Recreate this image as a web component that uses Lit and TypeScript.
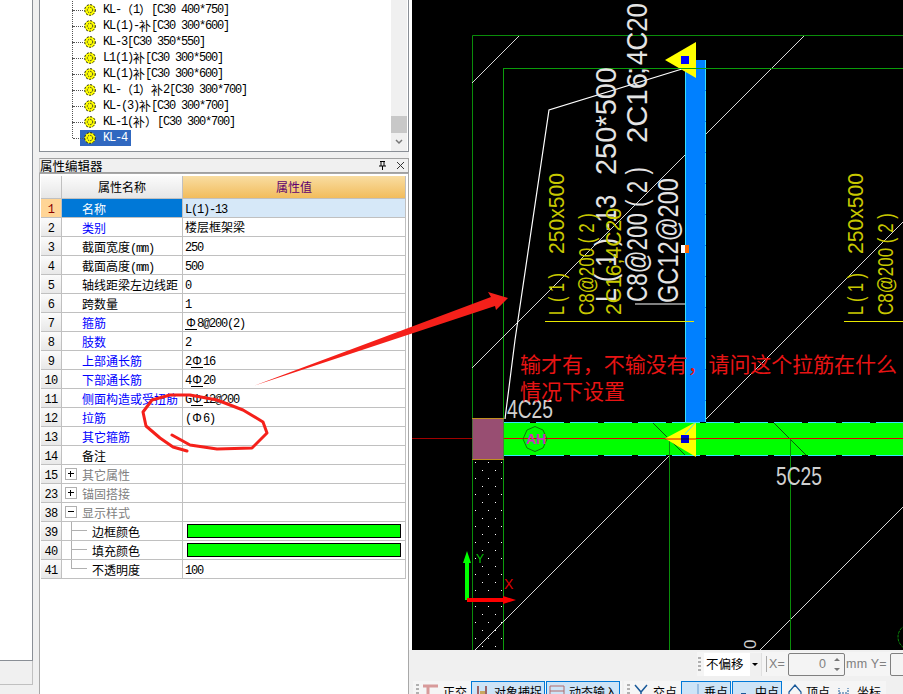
import { LitElement, css, html, svg } from "lit";
import { customElement } from "lit/decorators.js";

// latin glyphs run at 6px advance, CJK at 12px, like the bitmap font of the app
function runs(text: string) {
  const parts = text.match(/[\u2e80-\u9fff\uff00-\uffef]+|[^\u2e80-\u9fff\uff00-\uffef]+/g) || [];
  return parts.map((p) =>
    /[\u2e80-\u9fff\uff00-\uffef]/.test(p)
      ? html`<span class="cjk">${p}</span>`
      : html`<span class="lat">${p}</span>`
  );
}

// # = grade III rebar symbol, $ = plain round bar
function rebar(text: string) {
  const parts = text.split(/([#$])/);
  return parts.map((p) => {
    if (p === "#") return html`<span class="bar three">Φ</span>`;
    if (p === "$") return html`<span class="bar">Φ</span>`;
    return runs(p);
  });
}

const TREE = [
  "KL-（1）[C30 400*750]",
  "KL(1)-补[C30 300*600]",
  "KL-3[C30 350*550]",
  "L1(1)补[C30 300*500]",
  "KL(1)补[C30 300*600]",
  "KL-（1）补2[C30 300*700]",
  "KL-(3)补[C30 300*700]",
  "KL-1(补）[C30 300*700]",
  "KL-4",
];

type Row = {
  n: string;
  name: string;
  value?: string;
  kind?: "link" | "grp" | "sub";
  open?: boolean;
  swatch?: boolean;
  last?: boolean;
};

const ROWS: Row[] = [
  { n: "1", name: "名称", value: "L(1)-13", kind: "link" },
  { n: "2", name: "类别", value: "楼层框架梁", kind: "link" },
  { n: "3", name: "截面宽度(mm)", value: "250" },
  { n: "4", name: "截面高度(mm)", value: "500" },
  { n: "5", name: "轴线距梁左边线距", value: "0" },
  { n: "6", name: "跨数量", value: "1" },
  { n: "7", name: "箍筋", value: "#8@200(2)", kind: "link" },
  { n: "8", name: "肢数", value: "2", kind: "link" },
  { n: "9", name: "上部通长筋", value: "2#16", kind: "link" },
  { n: "10", name: "下部通长筋", value: "4#20", kind: "link" },
  { n: "11", name: "侧面构造或受扭筋", value: "G#12@200", kind: "link" },
  { n: "12", name: "拉筋", value: "($6)", kind: "link" },
  { n: "13", name: "其它箍筋", kind: "link" },
  { n: "14", name: "备注" },
  { n: "15", name: "其它属性", kind: "grp" },
  { n: "23", name: "锚固搭接", kind: "grp" },
  { n: "38", name: "显示样式", kind: "grp", open: true },
  { n: "39", name: "边框颜色", kind: "sub", swatch: true },
  { n: "40", name: "填充颜色", kind: "sub", swatch: true },
  { n: "41", name: "不透明度", kind: "sub", value: "100", last: true },
];

const gear = html`<svg class="gear" width="12" height="12" viewBox="0 0 12 12">
  <circle cx="6" cy="6" r="5.500" fill="#ffff00" />
  <circle cx="6" cy="6" r="5.300" fill="none" stroke="#111" stroke-dasharray="2 1.500" />
  <circle cx="6" cy="6" r="2.700" fill="none" stroke="#333" stroke-dasharray="1.500 1" />
</svg>`;

@customElement("cad-canvas")
export class CadCanvas extends LitElement {
  static styles = css`
    :host {
      display: block;
      width: 491px;
      height: 650px;
      background: #000;
    }
    svg {
      display: block;
    }
    .w {
      font-family: "Liberation Sans", sans-serif;
      fill: #e4e4e4;
      font-size: 30px;
    }
    .y {
      font-family: "Liberation Sans", sans-serif;
      fill: #c8c800;
      font-size: 22px;
    }
    .num {
      font-family: "Liberation Sans", sans-serif;
      fill: #d0d0d0;
      font-size: 25px;
    }
    .zero {
      font-family: "Liberation Sans", sans-serif;
      fill: #d0d0d0;
      font-size: 17px;
    }
    .note {
      font-family: "Noto Sans CJK SC", sans-serif;
      fill: #e81414;
      font-size: 21px;
    }
    .ah {
      font-family: "Liberation Sans", sans-serif;
      fill: #d030c0;
      font-size: 14px;
      font-weight: bold;
    }
    .ax {
      font-family: "Liberation Sans", sans-serif;
    }
  `;

  private _up(x: number, y: number, len: number, text: string, cls: string) {
    return svg`<text class=${cls} transform="translate(${x} ${y}) rotate(-90)" textLength=${len} lengthAdjust="spacingAndGlyphs">${text}</text>`;
  }

  render() {
    return html`<svg width="491" height="650" viewBox="412 0 491 650">
      <defs>
        <pattern id="dots" x="474" y="461" width="13" height="16" patternUnits="userSpaceOnUse">
          <rect x="1" y="1" width="1" height="1" fill="#fff" />
          <rect x="8" y="9" width="1" height="1" fill="#fff" />
        </pattern>
      </defs>

      <rect x="473" y="460" width="30" height="190" fill="url(#dots)" />

      <!-- grid frames -->
      <g fill="none" stroke="#0a8c0a" stroke-width="1">
        <path d="M472.500 650V35.500H903" />
        <path d="M503.500 650V68.500H903" stroke="#0c9c0c" />
      </g>

      <!-- hatch diagonals -->
      <g stroke="#eee" stroke-width="0.900" fill="none">
        <path d="M472 83L519 36" />
        <path d="M804 36L472 368" />
        <path d="M475 650L903 222" />
        <path d="M760 650L903 507" />
      </g>

      <!-- vertical beam -->
      <rect x="685" y="60" width="21" height="378" fill="#0080ff" />
      <path d="M685.500 69V422" stroke="#33e0ff" />
      <path d="M705.500 60V422" stroke="#33e0ff" stroke-dasharray="30 1" />

      <!-- horizontal beam -->
      <rect x="504" y="422" width="399" height="34" fill="#00ff00" />
      <path d="M504 422.500H903M504 455.500H903" stroke="#33e8ff" />
      <path d="M504 422.500H903M504 455.500H903" stroke="#000" stroke-dasharray="6 28" stroke-dashoffset="-60" />
      <path d="M653 423L685 455M774 423L806 455" stroke="#0a5a0a" />

      <!-- column -->
      <rect x="472.500" y="418.500" width="31" height="41" fill="#984e72" />
      <path d="M472 418.500H504M472 459.500H504" stroke="#c09020" />

      <!-- axis line and leaders -->
      <path d="M412 438.500H472" stroke="#a00000" />
      <path d="M504 438.500H903" stroke="#e00000" />
      <path d="M669.500 439V650M790.500 439V650" stroke="#0a8c0a" />
      <path d="M682 69L549 110L515 340L505 419" fill="none" stroke="#fff" stroke-width="1.200" />

      <polygon points="665,438.500 696,422 696,457" fill="#ffff00" />
      <path d="M696 422L685 434" stroke="#33e0ff" />
      <path d="M665 439H696" stroke="#e00000" />
      <rect x="681" y="435" width="8" height="8" fill="#0000e0" />
      <path d="M681 439H689" stroke="#111" />

      <polygon points="665,60 696,42 696,78" fill="#ffff00" />
      <rect x="681" y="56" width="8" height="8" fill="#0000ff" />
      <path d="M503 68.500H903" stroke="#0a9c0a" />

      <rect x="681" y="245" width="4" height="8" fill="#fff" />
      <rect x="685" y="245" width="4" height="8" fill="#ff6a00" />

      <!-- rotated labels -->
      ${this._up(616, 302, 107, "L ( 1 ) -13", "w")}
      ${this._up(616, 175, 108, "250*500", "w")}
      ${this._up(647, 302, 135, "C8@200 ( 2 )", "w")}
      ${this._up(647, 143, 70, "2C16", "w")}
      ${this._up(645, 75, 8, ";", "w")}
      ${this._up(647, 65, 62, "4C20", "w")}
      ${this._up(678, 303, 125, "GC12@200", "w")}
      <path d="M635 304H685" stroke="#fff" stroke-width="1.200" />

      ${this._up(564, 315, 42, "L ( 1 )", "y")}
      ${this._up(564, 254, 81, "250x500", "y")}
      ${this._up(594, 315, 102, "C8@200 ( 2 )", "y")}
      ${this._up(621, 315, 107, "2C16;4C20", "y")}
      <path d="M545 321.500H694" stroke="#e8e800" />

      ${this._up(863, 315, 42, "L ( 1 )", "y")}
      ${this._up(863, 254, 81, "250x500", "y")}
      ${this._up(893, 315, 102, "C8@200 ( 2 )", "y")}
      <path d="M844 321.500H903" stroke="#e8e800" />

      <text class="num" x="507" y="418" textLength="46" lengthAdjust="spacingAndGlyphs">4C25</text>
      <text class="num" x="776" y="485" textLength="46" lengthAdjust="spacingAndGlyphs">5C25</text>
      <text class="zero" transform="translate(756 649) rotate(-90)">0</text>

      <polygon points="523,439 527,430 535,426.500 543,430 547,439 543,448 535,451.500 527,448" fill="none" stroke="#0a7a0a" />
      <text class="ah" x="526" y="444">AH</text>
      <circle cx="911" cy="637" r="13" fill="none" stroke="#0a8c0a" stroke-dasharray="3 1" />

      <!-- UCS arrows -->
      <polygon points="465,600 465,563 463,563 467,551 471,563 469,563 469,600" fill="#00ff00" />
      <polygon points="467,598 503,598 503,596 516,600 503,604 503,602 467,602" fill="#ff0000" />
      <text class="ax" x="476" y="563" fill="#00c000" font-size="12">Y</text>
      <text class="ax" x="504" y="589" fill="#e00000" font-size="14">X</text>

      <text class="note" x="520" y="372" textLength="377">输才有，不输没有，请问这个拉筋在什么</text>
      <text class="note" x="520" y="399" textLength="105">情况下设置</text>
    </svg>`;
  }
}

@customElement("app-root")
export class AppRoot extends LitElement {
  static styles = css`
    :host {
      display: block;
      width: 903px;
      height: 694px;
    }
    .root {
      position: relative;
      display: flex;
      width: 903px;
      height: 694px;
      overflow: hidden;
      background: #f0f0f0;
      font-size: 12px;
      color: #000;
      font-family: "Noto Sans CJK SC", sans-serif;
    }
    .cjk {
      font-family: "Noto Sans CJK SC", sans-serif;
      font-size: 12px;
    }
    .lat {
      font-family: "Liberation Mono", monospace;
      font-size: 12px;
      letter-spacing: -1.2px;
      white-space: pre;
    }
    .bar {
      display: inline-block;
      width: 12px;
      height: 12px;
      line-height: 11px;
      text-align: center;
      font-family: "Liberation Sans", sans-serif;
      font-size: 12px;
      box-sizing: border-box;
    }
    .bar.three {
      border-bottom: 1px solid #000;
    }

    /* far left stub */
    .stub {
      width: 33px;
      flex: none;
      display: flex;
      flex-direction: column;
    }
    .stub-top {
      height: 661px;
      flex: none;
      box-sizing: border-box;
      background: #fff;
      border-right: 1px solid #8a8f96;
      border-bottom: 1px solid #8a8f96;
    }
    .stub-mid {
      height: 23px;
      flex: none;
      border-right: 1px solid #c0c0c0;
      border-bottom: 1px solid #c0c0c0;
    }

    /* tree and properties */
    .panels {
      width: 376px;
      flex: none;
      box-sizing: border-box;
      padding-left: 6px;
      display: flex;
      flex-direction: column;
    }
    .tree {
      height: 152px;
      flex: none;
      box-sizing: border-box;
      background: #fff;
      border: 1px solid #8a8f96;
      border-top: none;
      position: relative;
      padding-top: 2px;
    }
    .node {
      height: 16px;
      display: flex;
      align-items: center;
      padding-left: 32px;
      position: relative;
    }
    .node::before {
      content: "";
      position: absolute;
      left: 32px;
      top: -8px;
      height: 16px;
      border-left: 1px dotted #555;
    }
    .node::after {
      content: "";
      position: absolute;
      left: 33px;
      top: 8px;
      width: 10px;
      border-top: 1px dotted #555;
    }
    .label {
      display: flex;
      align-items: center;
      height: 16px;
      margin-left: 8px;
      padding: 0 4px;
      white-space: nowrap;
      line-height: 16px;
    }
    .label.sel {
      background: #3068c0;
      color: #fff;
    }
    .gear {
      margin-right: 7px;
      flex: none;
    }
    .vscroll {
      position: absolute;
      right: 1px;
      top: 0;
      bottom: 0;
      width: 16px;
      background: #f0f0f0;
    }
    .thumb {
      position: absolute;
      left: 0;
      right: 0;
      top: 116px;
      height: 17px;
      background: #c8c8c8;
    }
    .vscroll svg {
      position: absolute;
      left: 4px;
      top: 139px;
    }

    .title {
      margin-top: 6px;
      height: 15px;
      flex: none;
      box-sizing: border-box;
      border: 1px solid #a0a0a0;
      border-left-color: #d0d0d0;
      background: #f0f0f0;
      display: flex;
      align-items: center;
      gap: 9px;
      font-size: 12.500px;
      line-height: 13px;
      padding-right: 3px;
    }
    .title span {
      flex: 1;
    }
    .props {
      flex: 1;
      box-sizing: border-box;
      border: 1px solid #a8a8a8;
      border-bottom: none;
      padding: 2px 0 0 1px;
      background: #fff;
    }
    .grid {
      display: grid;
      grid-template-columns: 21px 121px 223px;
      grid-auto-rows: 19px;
      line-height: 18px;
    }
    .grid > div {
      box-sizing: border-box;
      border-right: 1px solid #c0c0c0;
      border-bottom: 1px solid #c0c0c0;
      white-space: nowrap;
      overflow: hidden;
    }
    .grid-head {
      display: grid;
      grid-template-columns: 21px 121px 223px;
    }
    .hd {
      height: 23px;
      box-sizing: border-box;
      border-right: 1px solid #c0c0c0;
      border-bottom: 1px solid #c0c0c0;
      text-align: center;
      line-height: 22px;
      background: linear-gradient(#fbfbfb, #e6e6e6);
    }
    .hd.val {
      background: linear-gradient(#f9dda2, #f2bc5c);
      color: #5e0070;
    }
    .idx {
      background: linear-gradient(#fbfbfb, #e8e8e8);
      text-align: center;
    }
    .idx .lat {
      letter-spacing: -0.6px;
    }
    .idx.cur {
      background: #ffd596;
      color: #8a0000;
    }
    .name {
      padding-left: 20px;
      padding-top: 1px;
      position: relative;
    }
    .name.link {
      color: #0000ff;
    }
    .name.cur {
      background: #0078d7;
      color: #fff;
    }
    .name.grp {
      color: #808080;
    }
    .name.sub {
      padding-left: 30px;
    }
    .val-cell {
      padding-left: 2px;
    }
    .val-cell.cur {
      background: #d6e8f8;
    }
    .box {
      position: absolute;
      left: 3px;
      top: 3px;
      width: 12px;
      height: 12px;
      box-sizing: border-box;
      border: 1px solid #b0b0b0;
      background: #fff;
    }
    .box::before {
      content: "";
      position: absolute;
      left: 2px;
      right: 2px;
      top: 4px;
      border-top: 1px solid #000;
    }
    .box.plus::after {
      content: "";
      position: absolute;
      left: 4px;
      top: 2px;
      bottom: 2px;
      border-left: 1px solid #000;
    }
    .tick {
      position: absolute;
      left: 9px;
      top: -1px;
      width: 16px;
      height: 10px;
      border-left: 1px solid #b0b0b0;
      border-bottom: 1px solid #b0b0b0;
      box-sizing: border-box;
    }
    .tick.mid::after {
      content: "";
      position: absolute;
      left: -1px;
      top: 9px;
      height: 10px;
      border-left: 1px solid #b0b0b0;
    }
    .swatch {
      height: 14px;
      box-sizing: border-box;
      margin: 2px 4px 0 2px;
      border: 1px solid #000;
      background: #00ff00;
    }

    /* canvas and status bars */
    .main {
      flex: 1;
      display: flex;
      flex-direction: column;
      min-width: 0;
    }
    .view {
      height: 650px;
      flex: none;
      box-sizing: border-box;
      padding-left: 3px;
      background: #fff;
    }
    .bar1 {
      height: 26px;
      flex: none;
      display: flex;
      padding: 2px 0 0 288px;
      box-sizing: border-box;
      margin-bottom: 5px;
    }
    .strip {
      display: flex;
      align-items: center;
      background: #f5f5f5;
      height: 24px;
      flex: none;
      color: #000;
      white-space: nowrap;
    }
    .grip {
      width: 3px;
      height: 14px;
      margin: 0 3px 0 1px;
      flex: none;
      background: repeating-linear-gradient(#b0b0b0 0 2px, transparent 2px 4px);
    }
    .combo {
      width: 46px;
      height: 23px;
      line-height: 22px;
      background: #fff;
      padding-left: 2px;
      box-sizing: border-box;
      font-size: 12.500px;
    }
    .combo-arrow {
      width: 12px;
      height: 23px;
      background: #f0f0f0;
      position: relative;
      border-right: 1px solid #e0e0e0;
      box-sizing: border-box;
    }
    .combo-arrow::after {
      content: "";
      position: absolute;
      left: 2px;
      top: 10px;
      border: 3px solid transparent;
      border-top: 3px solid #000;
    }
    .sep {
      width: 1px;
      height: 16px;
      background: #a8a8a8;
      margin: 0 2px 0 4px;
    }
    .muted {
      font-family: "Liberation Sans", sans-serif;
      font-size: 12.500px;
      color: #808080;
      letter-spacing: 0.200px;
    }
    .input {
      height: 23px;
      box-sizing: border-box;
      border: 1px solid #808080;
      border-radius: 2px;
      background: #f4f4f4;
      display: flex;
      align-items: center;
      justify-content: flex-end;
      font-family: "Liberation Sans", sans-serif;
      font-size: 12.500px;
      color: #808080;
      margin: 0 1px 0 3px;
    }
    .input.x {
      width: 57px;
      padding-right: 18px;
      position: relative;
    }
    .input.x svg {
      position: absolute;
      right: 3px;
      top: 3px;
    }
    .input.y {
      width: 30px;
      flex: none;
    }
    .bar2 {
      height: 13px;
      display: flex;
      gap: 2px;
      padding-left: 4px;
      overflow: hidden;
      align-items: flex-start;
    }
    .tgroup {
      display: flex;
      background: #f5f5f5;
      height: 24px;
      align-items: flex-start;
      padding-right: 2px;
    }
    .tgroup .grip {
      margin: 3px 1px 0 3px;
    }
    .tool {
      display: flex;
      align-items: flex-start;
      gap: 5px;
      height: 24px;
      box-sizing: border-box;
      padding: 1px 3px 0;
      line-height: 20px;
      white-space: nowrap;
    }
    .tool.on {
      background: #cde4f7;
      border: 1px solid #0078d7;
      padding: 0 2px;
      gap: 4px;
      margin-left: 1px;
    }
    .tool.push {
      margin-left: 3px;
      gap: 4px;
    }
    .tool svg {
      flex: none;
      margin-top: 2px;
    }

    .ink {
      position: absolute;
      left: 0;
      top: 0;
      pointer-events: none;
    }
  `;

  private _cell(r: Row, i: number) {
    const cur = i === 0 ? "cur" : "";
    const nameCls = `name ${r.kind || ""} ${cur}`;
    return html`
      <div class="idx ${cur}">${runs(r.n)}</div>
      <div class=${nameCls}>
        ${r.kind === "grp"
          ? html`<span class="box ${r.open ? "" : "plus"}"></span>`
          : ""}
        ${r.kind === "sub"
          ? html`<span class="tick ${r.last ? "" : "mid"}"></span>`
          : ""}
        ${r.name.includes("(mm)")
          ? html`<span class="cjk">${r.name.replace("(mm)", "")}</span><span class="lat">(mm)</span>`
          : r.name}
      </div>
      <div class="val-cell ${cur}">
        ${r.swatch ? html`<div class="swatch"></div>` : r.value ? rebar(r.value) : ""}
      </div>
    `;
  }

  render() {
    return html`<div class="root">
      <div class="stub">
        <div class="stub-top"></div>
        <div class="stub-mid"></div>
      </div>

      <div class="panels">
        <div class="tree">
          ${TREE.map(
            (t, i) => html`<div class="node">
              <div class="label ${i === TREE.length - 1 ? "sel" : ""}">${gear}${runs(t)}</div>
            </div>`
          )}
          <div class="vscroll">
            <div class="thumb"></div>
            <svg width="8" height="6" viewBox="0 0 8 6">
              <path d="M1 1L4 4L7 1" fill="none" stroke="#777" stroke-width="1.500" />
            </svg>
          </div>
        </div>

        <div class="title">
          <span>属性编辑器</span>
          <svg width="9" height="9" viewBox="0 0 9 9">
            <path d="M2 0.500H7M3 0.500V5M6 0.500V5M1 5H8M4.500 5V9" fill="none" stroke="#000" />
          </svg>
          <svg width="9" height="9" viewBox="0 0 9 9">
            <path d="M1 1L8 8M8 1L1 8" stroke="#333" />
          </svg>
        </div>

        <div class="props">
          <div class="grid-head">
            <div class="hd"></div>
            <div class="hd">属性名称</div>
            <div class="hd val">属性值</div>
          </div>
          <div class="grid">${ROWS.map((r, i) => this._cell(r, i))}</div>
        </div>
      </div>

      <div class="main">
        <div class="view"><cad-canvas></cad-canvas></div>
        <div class="bar1">
          <div class="strip">
            <div class="grip"></div>
            <div class="combo">不偏移</div>
            <div class="combo-arrow"></div>
            <div class="sep"></div>
            <span class="muted">X=</span>
            <div class="input x">
              0
              <svg width="8" height="15" viewBox="0 0 8 15">
                <path d="M1 4L4 1L7 4zM1 11L4 14L7 11z" fill="#777" />
              </svg>
            </div>
            <span class="muted">mm Y=</span>
            <div class="input y"></div>
          </div>
        </div>
        <div class="bar2">
          <div class="tgroup">
            <div class="grip"></div>
            <div class="tool">
              <svg width="15" height="14" viewBox="0 0 15 14">
                <path d="M0 2H15M5 2V14" stroke="#d89a9a" stroke-width="3" fill="none" />
              </svg>
              正交
            </div>
            <div class="tool on">
              <svg width="16" height="14" viewBox="0 0 16 14">
                <path d="M1 12H15M4 2V12M12 2V12" stroke="#8a3a3a" stroke-width="1.500" fill="none" />
                <rect x="6" y="7" width="5" height="4" fill="#c8a860" />
              </svg>
              对象捕捉
            </div>
            <div class="tool on">
              <svg width="16" height="14" viewBox="0 0 16 14">
                <path d="M1 2H15V13H1zM1 7H15" stroke="#b06a6a" fill="none" />
              </svg>
              动态输入
            </div>
          </div>
          <div class="tgroup">
            <div class="grip"></div>
            <div class="tool">
              <svg width="14" height="14" viewBox="0 0 14 14">
                <path d="M1 1L7 8L13 1M7 8V14" stroke="#1a5a9a" stroke-width="1.500" fill="none" />
              </svg>
              交点
            </div>
            <div class="tool on">
              <svg width="16" height="14" viewBox="0 0 16 14">
                <path d="M14 0V14" stroke="#8ab4dc" stroke-width="1.500" fill="none" />
              </svg>
              垂点
            </div>
            <div class="tool on">
              <svg width="16" height="14" viewBox="0 0 16 14">
                <path d="M1 12H15" stroke="#1a5a9a" stroke-width="1.500" />
                <rect x="6" y="9" width="5" height="5" fill="#1a5a9a" />
              </svg>
              中点
            </div>
            <div class="tool push">
              <svg width="14" height="14" viewBox="0 0 14 14">
                <path d="M1 8L7 1L13 8V14H1z" stroke="#1a5a9a" stroke-width="1.200" fill="none" />
              </svg>
              顶点
            </div>
            <div class="tool">
              <svg width="16" height="14" viewBox="0 0 16 14">
                <path d="M3 14V4M12 14V4M3 9H12" stroke="#1a5a9a" stroke-dasharray="2 1" fill="none" />
              </svg>
              坐标
            </div>
          </div>
        </div>
      </div>

      <!-- freehand marks someone drew over the screenshot -->
      <svg class="ink" width="903" height="694" viewBox="0 0 903 694">
        <polygon points="253,386 491,297 488,292 508,298 496,310 495,306" fill="#f5201a" />
        <path
          d="M187 451L173 447L160 438L146 426L143 412L152 400L170 395L190 395L217 400L243 410L263 422L267 433L252 448L217 449L190 445L172 435"
          fill="none"
          stroke="#f5201a"
          stroke-width="3"
          stroke-linejoin="round"
          stroke-linecap="round"
        />
      </svg>
    </div>`;
  }
}
